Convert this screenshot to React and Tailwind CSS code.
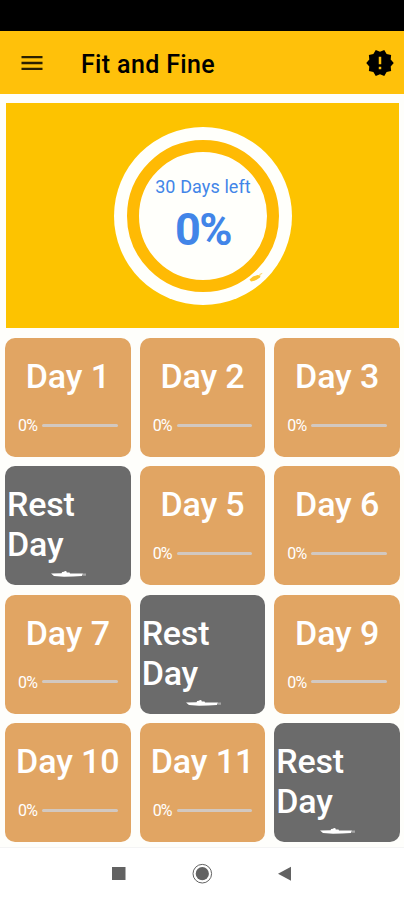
import React from "react";
import { MdMenu, MdNewReleases } from "react-icons/md";

const days = [
  { id: 1 },
  { id: 2 },
  { id: 3 },
  { id: 4, rest: true },
  { id: 5 },
  { id: 6 },
  { id: 7 },
  { id: 8, rest: true },
  { id: 9 },
  { id: 10 },
  { id: 11 },
  { id: 12, rest: true },
];

const Header = () => {
  return (
    <header className="flex h-[63px] shrink-0 items-center bg-[#ffc10a] pr-[9px] pl-[18px] text-black">
      <button aria-label="Menu">
        <MdMenu className="h-7 w-7 text-[#2b2000]" />
      </button>
      <h1 className="ml-[35px] pt-[5px] text-[25px] leading-[30px] font-medium tracking-[0.35px]">
        Fit and Fine
      </h1>
      <button aria-label="Updates" className="ml-auto">
        <MdNewReleases className="h-[30px] w-[30px]" />
      </button>
    </header>
  );
};

const Progress = ({ daysLeft, percent }) => {
  return (
    <section className="mx-auto mt-[9px] flex h-[225px] w-[393px] shrink-0 justify-center bg-[#fdc300] pt-6 pl-[2px]">
      <div className="relative h-[178px] w-[178px] rounded-full bg-[#fffffb] p-[13px]">
        <div className="flex h-full w-full flex-col items-center rounded-full border-[12px] border-[#ffba04] pt-[25px] text-[#4285e8]">
          <p className="text-[18px] leading-5 tracking-[0.1px]">
            {daysLeft} Days left
          </p>
          <p className="mt-[10px] text-[45px] leading-[46px] font-bold tracking-[-1.5px]">
            {percent}%
          </p>
        </div>
        {/* Small mark on the outer ring */}
        <svg
          className="absolute top-[145px] left-[134px] h-3 w-5"
          viewBox="0 0 20 12"
        >
          <path
            d="M1.5 7.5 L5 4.5 L9.5 3 L12.5 3.5 L12 5.5 L9 7.5 L6.5 8.8 L3 9.5 Z"
            fill="#ffc62b"
          />
          <path d="M11 2.2 L14.5 0.8 L14 2 L12 3 Z" fill="#ffd564" />
        </svg>
      </div>
    </section>
  );
};

const Boat = () => {
  return (
    <svg
      className="absolute bottom-[6px] left-[46px] h-[9px] w-9"
      viewBox="0 0 36 9"
      fill="white"
    >
      <path d="M0 3.4 L10.5 3.2 L11.2 2 L13 1.8 L14 0.9 L15.4 1.2 L15.8 2.4 L18.5 2.6 L19 3.4 L32 3.4 L31 6 L22 6.6 L13 6.8 L3 6 Z" />
      <path d="M31.5 3.4 h3.5 v2.4 h-2.8 Z" fill="#a5a5a5" />
    </svg>
  );
};

const DayCard = ({ day }) => {
  if (day.rest) {
    return (
      <div className="relative h-[119px] rounded-[10px] bg-[#6b6b6b] pt-[18px] pl-[2px] text-[34px] leading-10 font-medium tracking-[-0.2px] text-white">
        <p className="w-20">Rest Day</p>
        <Boat />
      </div>
    );
  }

  return (
    <div className="h-[119px] rounded-[10px] bg-[#e1a563] pt-[18px] text-white">
      <p className="text-center text-[34px] leading-10 font-medium tracking-[-0.1px]">
        Day {day.id}
      </p>
      <div className="mt-[18px] flex items-center gap-1 px-[13px]">
        <span className="w-5 pt-[2px] text-[16px] leading-5 tracking-[-0.8px]">
          0%
        </span>
        <div className="h-[3px] flex-1 rounded-full bg-[#d2c8c0]"></div>
      </div>
    </div>
  );
};

const NavBar = () => {
  return (
    <nav className="mt-[5px] flex h-[53px] shrink-0 justify-center border-t border-[#f4f4f4] bg-white">
      <svg className="h-[52px] w-[404px]" viewBox="0 0 404 52">
        <rect x="112" y="19" width="13.5" height="13" fill="#626262" />
        <circle cx="202.3" cy="25.7" r="9.3" fill="none" stroke="#626262" />
        <circle cx="202.3" cy="25.7" r="6.6" fill="#626262" />
        <path d="M278 25.7 L291 18.7 V32.7 Z" fill="#626262" />
      </svg>
    </nav>
  );
};

const App = () => {
  return (
    <div className="flex h-[900px] w-[404px] flex-col overflow-hidden bg-[#fefefb] font-['Roboto',sans-serif]">
      <div className="h-[31px] shrink-0 bg-black"></div>
      <Header />
      <Progress daysLeft={30} percent={0} />
      <main className="mt-2.5 grid grid-cols-3 gap-x-[9px] gap-y-[9.4px] pr-1 pl-[5px]">
        {days.map((day) => (
          <DayCard key={day.id} day={day} />
        ))}
      </main>
      <NavBar />
    </div>
  );
};

export default App;
